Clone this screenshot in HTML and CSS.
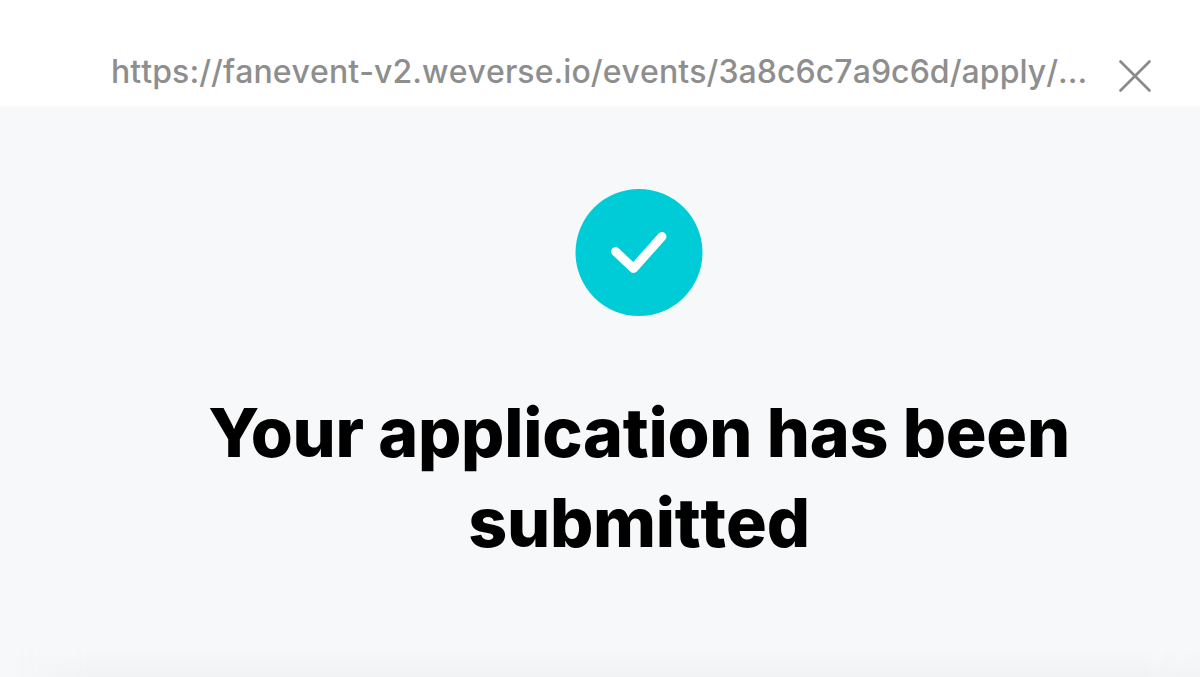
FILE: index.html
```html
<!DOCTYPE html>
<html lang="en">
<head>
    <meta charset="UTF-8">
    <meta name="viewport" content="width=device-width, initial-scale=1.0">
    <title>Application submitted</title>
    <link rel="stylesheet" href="styles.css">
</head>
<body>
    <header class="topbar">
        <span class="url">https://fanevent-v2.weverse.io/events/3a8c6c7a9c6d/apply/...</span>
        <button class="close-btn" aria-label="Close">
            <svg width="34" height="34" viewBox="0 0 34 34">
                <path d="M2.500 2.500 L31.500 31.500 M31.500 2.500 L2.500 31.500"/>
            </svg>
        </button>
    </header>

    <main class="content">
        <svg class="check" width="128" height="128" viewBox="0 0 128 128">
            <circle cx="64" cy="64.500" r="63.500"/>
            <path d="M40.500 63.500 L58.500 80.500 L87 48.500"/>
        </svg>
        <h1>Your application has been <span class="status">submitted</span></h1>
    </main>

    <div class="bottom-shadow"></div>
</body>
</html>
```

FILE: styles.css
```css
* {
    box-sizing: border-box;
}

body {
    margin: 0;
    height: 100vh;
    display: flex;
    flex-direction: column;
    overflow: hidden;
    font-family: Inter, "Liberation Sans", sans-serif;
    background-color: #f7f8fa;
}

.topbar {
    display: flex;
    flex: none;
    justify-content: space-between;
    height: 107px;
    padding: 52px 48px 0 111px;
    background-color: white;
    border-bottom: 1px solid #f8f8f8;
}

.url {
    font-size: 32px;
    font-weight: 500;
    font-kerning: none;
    line-height: 40px;
    letter-spacing: 0.07px;
    color: #8e8e8e;
    white-space: nowrap;
}

.close-btn {
    margin-top: 7px;
    padding: 0;
    width: 34px;
    height: 34px;
    border: none;
    background: none;
    cursor: pointer;
}

.close-btn svg {
    display: block;
    fill: none;
    stroke: #8a8a8a;
    stroke-width: 2.7;
    stroke-linecap: round;
}

.content {
    flex: 1;
    display: flex;
    flex-direction: column;
    align-items: center;
    padding: 81px 0 0 78px;
}

.check {
    flex: none;
}

.check circle {
    fill: #00ccd8;
}

.check path {
    fill: none;
    stroke: white;
    stroke-width: 9;
    stroke-linecap: round;
    stroke-linejoin: round;
}

h1 {
    width: 900px;
    margin: 71px 0 0;
    font-size: 68px;
    font-weight: 800;
    line-height: 90px;
    letter-spacing: -0.28px;
    text-align: center;
    color: black;
}

/* kerning makes the two t's touch */
.status {
    font-kerning: none;
}

.bottom-shadow {
    flex: none;
    height: 28px;
    background: linear-gradient(to bottom, #f7f8fa, #f1f2f3);
    mask-image: linear-gradient(to right, transparent 15px, black 90px, black 1140px, rgba(0, 0, 0, 0.7));
}
```
